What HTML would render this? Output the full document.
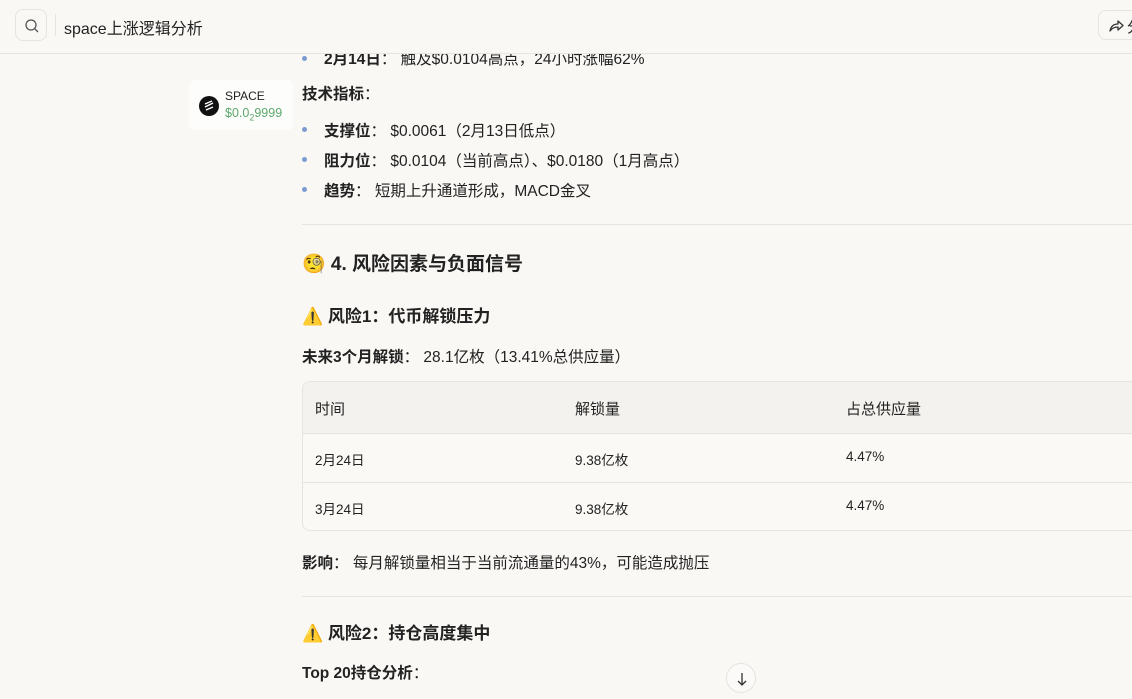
<!DOCTYPE html>
<html><head><meta charset="utf-8"><style>
*{margin:0;padding:0;box-sizing:border-box}
body{width:1132px;height:695px;overflow:hidden;background:#f9f8f5;font-family:"Liberation Sans","Noto Sans CJK SC",sans-serif;color:#222;position:relative}
.t{position:absolute;white-space:nowrap;font-size:15.5px}
b{font-weight:700}
.dot{position:absolute;width:5px;height:5px;border-radius:50%;background:#7c9bd0}
.hr{position:absolute;left:302px;width:830px;height:1px;background:#e6e4df}
.card{position:absolute;left:189px;top:80px;width:104px;height:50px;background:#fdfdfc;border-radius:6px}
.tbl{position:absolute;left:302px;top:381px;width:840px;height:150px;border:1px solid #e6e4df;border-radius:8px;overflow:hidden;background:#faf9f6}
.th{position:absolute;left:0;top:0;width:100%;height:52px;background:#f3f2ee;border-bottom:1px solid #e6e4df}
.rl{position:absolute;left:0;width:100%;height:1px;background:#e6e4df}
.c{position:absolute;font-size:13.5px;white-space:nowrap}
</style></head><body>
<div class="t" style="left:324px;top:47px"><b>2月14日</b>： 触及$0.0104高点，24小时涨幅62%</div>
<div class="dot" style="left:302px;top:56px"></div>
<div style="position:absolute;left:0;top:0;width:1132px;height:54px;background:#f9f8f5;border-bottom:1px solid #e6e4df;z-index:1"></div>
<div style="position:absolute;left:15px;top:9px;width:32px;height:32px;border:1px solid #e6e4df;border-radius:8px;z-index:2"><svg width="32" height="32" viewBox="0 0 32 32"><circle cx="15" cy="15" r="5" fill="none" stroke="#555" stroke-width="1.3"/><path d="M19 19l3 3" stroke="#555" stroke-width="1.3"/></svg></div>
<div style="position:absolute;left:55px;top:14px;width:1px;height:22px;background:#e6e4df;z-index:2"></div>
<div style="position:absolute;left:64px;top:15px;font-size:16px;color:#222;z-index:2">space上涨逻辑分析</div>
<div style="position:absolute;left:1098px;top:10px;width:50px;height:30px;border:1px solid #e6e4df;border-radius:8px;z-index:2"><svg width="20" height="20" viewBox="0 0 20 20" style="position:absolute;left:7px;top:5px"><path d="M4 15c1-5 4-7 8-7V5l5 4.5-5 4.5v-3c-3 0-6 1-8 4z" fill="none" stroke="#333" stroke-width="1.3" stroke-linejoin="round"/></svg><span style="position:absolute;left:28px;top:5px;font-size:15px">分</span></div>

<div class="card">
<svg width="20" height="20" viewBox="0 0 20 20" style="position:absolute;left:10px;top:16px"><circle cx="10" cy="10" r="10" fill="#111"/><path d="M6 8l7-3M6 11l8-4M7 14l7-3" stroke="#fff" stroke-width="1.4"/></svg>
<div style="position:absolute;left:36px;top:9px;font-size:12px;color:#222">SPACE</div>
<div style="position:absolute;left:36px;top:26px;font-size:12.5px;color:#5aa86a">$0.0<sub style="font-size:9px">2</sub>9999</div>
</div>

<div class="t" style="left:302px;top:82px"><b>技术指标</b>：</div>
<div class="dot" style="left:302px;top:127px"></div><div class="t" style="left:324px;top:119px"><b>支撑位</b>： $0.0061（2月13日低点）</div>
<div class="dot" style="left:302px;top:157px"></div><div class="t" style="left:324px;top:149px"><b>阻力位</b>： $0.0104（当前高点）、$0.0180（1月高点）</div>
<div class="dot" style="left:302px;top:187px"></div><div class="t" style="left:324px;top:179px"><b>趋势</b>： 短期上升通道形成，MACD金叉</div>
<div class="hr" style="top:224px"></div>
<div class="t" style="left:302px;top:249px;font-size:19px"><b>🧐 4. 风险因素与负面信号</b></div>
<div class="t" style="left:302px;top:302px;font-size:17px"><b><span style="color:#e6b000">⚠️</span> 风险1：代币解锁压力</b></div>
<div class="t" style="left:302px;top:345px"><b>未来3个月解锁</b>： 28.1亿枚（13.41%总供应量）</div>
<div class="tbl">
<div class="th"></div>
<div class="rl" style="top:100px"></div>
<div class="c" style="left:12px;top:16px;font-size:15px">时间</div>
<div class="c" style="left:272px;top:16px;font-size:15px">解锁量</div>
<div class="c" style="left:543px;top:16px;font-size:15px">占总供应量</div>
<div class="c" style="left:12px;top:67px">2月24日</div><div class="c" style="left:272px;top:67px">9.38亿枚</div><div class="c" style="left:543px;top:67px">4.47%</div>
<div class="c" style="left:12px;top:116px">3月24日</div><div class="c" style="left:272px;top:116px">9.38亿枚</div><div class="c" style="left:543px;top:116px">4.47%</div>
</div>
<div class="t" style="left:302px;top:551px"><b>影响</b>： 每月解锁量相当于当前流通量的43%，可能造成抛压</div>
<div class="hr" style="top:596px"></div>
<div class="t" style="left:302px;top:619px;font-size:17px"><b><span style="color:#e6b000">⚠️</span> 风险2：持仓高度集中</b></div>
<div class="t" style="left:302px;top:661px"><b>Top 20持仓分析</b>：</div>
<div style="position:absolute;left:726px;top:663px;width:30px;height:30px;border:1px solid #e6e4df;border-radius:50%;background:#fbfaf8"><svg width="30" height="30" viewBox="0 0 30 30"><path d="M15 9v12M11 17l4 4 4-4" fill="none" stroke="#333" stroke-width="1.3"/></svg></div>
</body></html>
